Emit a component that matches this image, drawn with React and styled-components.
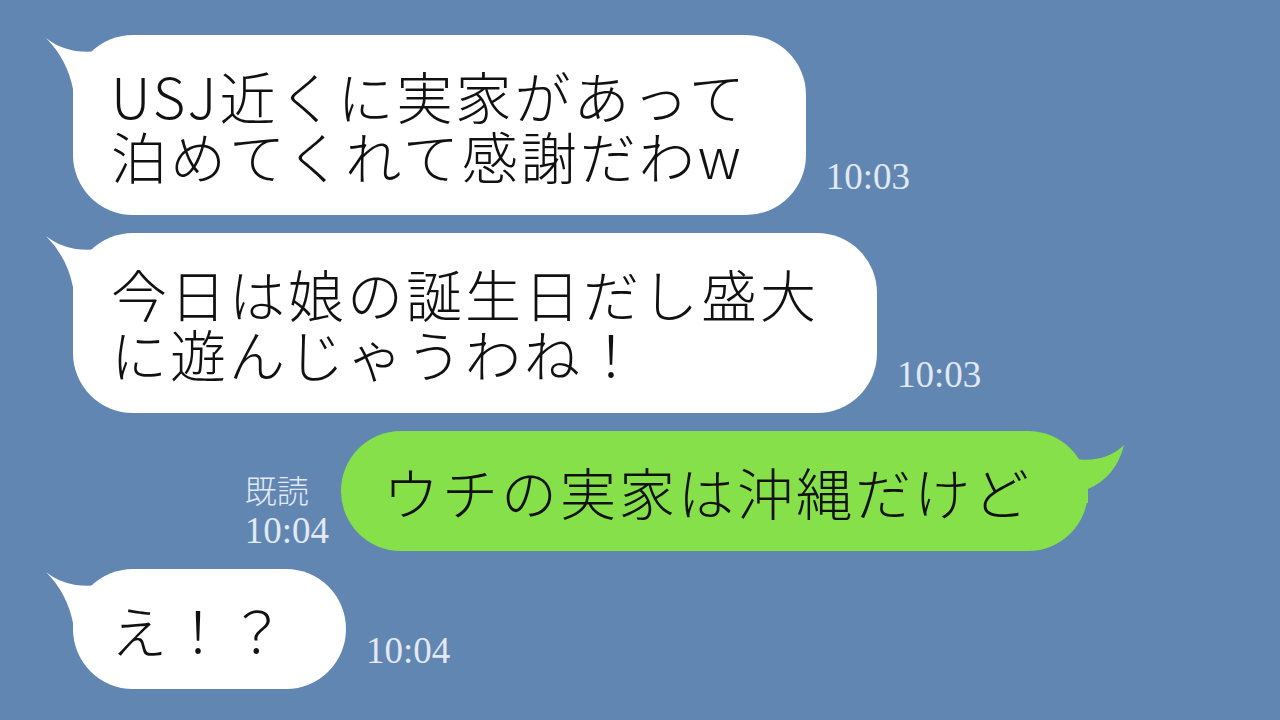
import React from 'react';
import styled, { createGlobalStyle } from 'styled-components';

const GlobalStyle = createGlobalStyle`
  html, body {
    margin: 0;
    padding: 0;
    background: #6186b2;
  }
  body {
    width: 1280px;
    height: 720px;
    overflow: hidden;
    font-family: "Noto Sans CJK JP", "Noto Sans", sans-serif;
  }
`;

const messages = [
  { id: 1, side: 'left', lines: ['USJ近くに実家があって', '泊めてくれて感謝だわw'], time: '10:03' },
  { id: 2, side: 'left', lines: ['今日は娘の誕生日だし盛大', 'に遊んじゃうわね！'], time: '10:03' },
  { id: 3, side: 'right', lines: ['ウチの実家は沖縄だけど'], time: '10:04', read: true },
  { id: 4, side: 'left', lines: ['え！？'], time: '10:04' },
];

export default function App() {
  return (
    <>
      <GlobalStyle />
      <Screen>
        {messages.map((m) => (
          <Row key={m.id} side={m.side}>
            {m.side === 'right' && (
              <Meta side="right">
                {m.read && <Read>既読</Read>}
                <Time>{m.time}</Time>
              </Meta>
            )}
            <Bubble side={m.side}>
              {m.side === 'left' ? <LeftTail /> : <RightTail />}
              {m.lines.map((l, i) => (
                <Line key={i}>{l}</Line>
              ))}
            </Bubble>
            {m.side === 'left' && (
              <Meta side="left">
                <Time>{m.time}</Time>
              </Meta>
            )}
          </Row>
        ))}
      </Screen>
    </>
  );
}

function LeftTail() {
  return (
    <TailSvg side="left" viewBox="0 0 60 64" width="60" height="64">
      <path d="M1 3 Q 22 20 54 16 L 54 64 L 28 64 L 28 54 Q 22 24 1 3 Z" fill="#ffffff" />
    </TailSvg>
  );
}

function RightTail() {
  return (
    <TailSvg side="right" viewBox="0 0 60 72" width="60" height="72">
      <path d="M56 14 Q 38 32 6 28 L 0 72 L 20 72 L 20 58 Q 48 46 56 14 Z" fill="#85e04a" />
    </TailSvg>
  );
}

const Screen = styled.div`
  display: flex;
  flex-direction: column;
  gap: 18px;
  padding-top: 35px;
`;

const Row = styled.div`
  display: flex;
  align-items: flex-end;
  justify-content: ${(p) => (p.side === 'right' ? 'flex-end' : 'flex-start')};
  padding-left: ${(p) => (p.side === 'right' ? '0' : '73px')};
  padding-right: ${(p) => (p.side === 'right' ? '192px' : '0')};
`;

const Bubble = styled.div`
  position: relative;
  background: ${(p) => (p.side === 'right' ? '#85e04a' : '#ffffff')};
  border-radius: 60px;
  padding: ${(p) => (p.side === 'right' ? '30px 56px 30px 42px' : '30px 58px 30px 38px')};
  color: #111;
  font-size: 56px;
  font-weight: 300;
  line-height: 60px;
  letter-spacing: 3px;
  white-space: nowrap;
`;

const Line = styled.div``;

const TailSvg = styled.svg`
  position: absolute;
  top: 0;
  ${(p) => (p.side === 'right' ? 'right: -40px;' : 'left: -28px;')}
  display: block;
`;

const Meta = styled.div`
  display: flex;
  flex-direction: column;
  align-items: flex-start;
  margin: ${(p) => (p.side === 'right' ? '0 12px 0 0' : '0 0 0 20px')};
  padding-bottom: ${(p) => (p.side === 'right' ? '2px' : '20px')};
  color: #e2e9f2;
`;

const Read = styled.div`
  font-family: "Noto Sans CJK JP", sans-serif;
  font-weight: 300;
  font-size: 32px;
  line-height: 40px;
  margin-bottom: 4px;
`;

const Time = styled.div`
  font-family: "Liberation Serif", serif;
  font-size: 37px;
  line-height: 36px;
`;
